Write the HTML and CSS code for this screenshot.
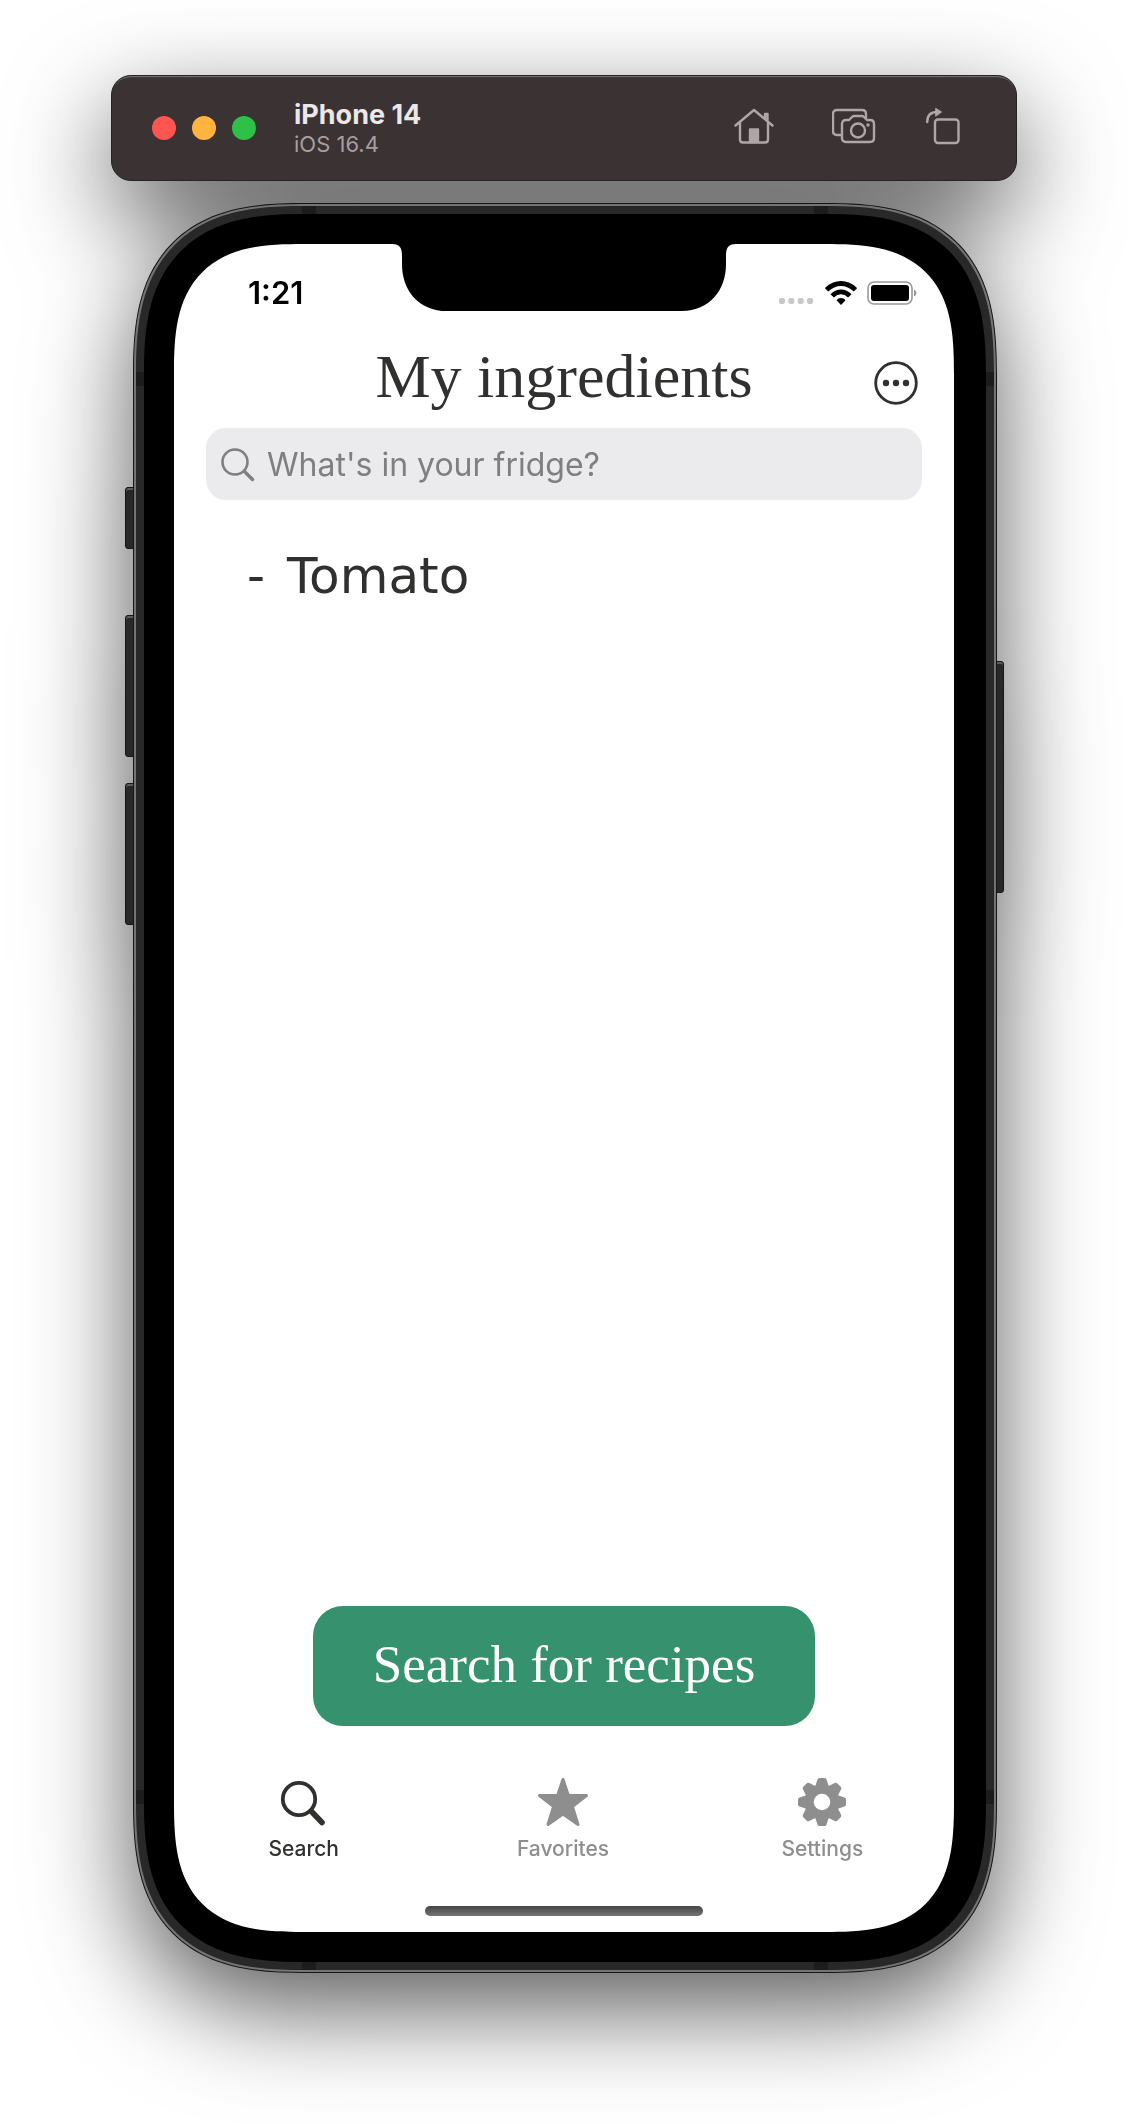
FILE: index.html
```html
<!DOCTYPE html>
<html lang="en">
<head>
<meta charset="utf-8">
<meta name="viewport" content="width=device-width, initial-scale=1">
<title>My ingredients</title>
<link rel="stylesheet" href="styles.css">
</head>
<body>
<div class="simulator">
  <header class="toolbar">
    <div class="lights">
      <button class="light light-close" aria-label="Close"></button>
      <button class="light light-minimize" aria-label="Minimize"></button>
      <button class="light light-zoom" aria-label="Zoom"></button>
    </div>
    <div class="device">
      <div class="device-name">iPhone 14</div>
      <div class="device-os">iOS 16.4</div>
    </div>
    <div class="tools">
      <button class="tool" aria-label="Home">
        <svg width="48" height="38" viewBox="0 0 48 38" fill="none" stroke="currentColor" stroke-width="2.400" stroke-linecap="round" stroke-linejoin="round"><path d="M1.500 18.500 20 3 38.500 18.500M6 15v17.500q0 3 3 3h22q3 0 3-3V15M31 11V7h2.500v6"/><path d="M16 35V22.500h8V35z" fill="currentColor"/></svg>
      </button>
      <button class="tool" aria-label="Screenshot">
        <svg width="44" height="38" viewBox="0 0 44 38" fill="none" stroke="currentColor" stroke-width="2.400" stroke-linejoin="round" stroke-linecap="round"><path d="M9 28H5q-4 0-4-4V7q0-4 4-4h25q4 0 4 4v3.500"/><path d="M10 31V17q0-4 4-4h3l3-3q1-1 2.500-1h7q1.500 0 2.500 1l3 3h3q4 0 4 4v14q0 4-4 4H14q-4 0-4-4z"/><circle cx="26" cy="23.500" r="7"/><circle cx="36" cy="18" r="1.700" fill="currentColor" stroke="none"/></svg>
      </button>
      <button class="tool" aria-label="Rotate">
        <svg width="34" height="38" viewBox="0 0 34 38" fill="none" stroke="currentColor" stroke-width="2.400" stroke-linejoin="round" stroke-linecap="round"><rect x="9" y="12.500" width="23.500" height="23.500" rx="3"/><path d="M1.200 15q0-10 10-10"/><path d="M10 1.500 15.500 5 10 9z" fill="currentColor" stroke-width="1"/></svg>
      </button>
    </div>
  </header>

  <div class="phone">
    <span class="key key-mute"></span>
    <span class="key key-up"></span>
    <span class="key key-down"></span>
    <span class="key key-power"></span>
    <div class="rim">
      <div class="band">
        <span class="seam seam-across seam-left seam-top-edge"></span>
        <span class="seam seam-across seam-right seam-top-edge"></span>
        <span class="seam seam-across seam-left seam-bottom-edge"></span>
        <span class="seam seam-across seam-right seam-bottom-edge"></span>
        <span class="seam seam-down seam-top seam-left-edge"></span>
        <span class="seam seam-down seam-top seam-right-edge"></span>
        <span class="seam seam-down seam-bottom seam-left-edge"></span>
        <span class="seam seam-down seam-bottom seam-right-edge"></span>
        <div class="bezel">
          <main class="screen">
            <svg class="notch" width="344" height="68" viewBox="0 0 344 68"><path d="M0 0H344C336 0 334 4 334 12V20C334 47 317 67 289 67H55C27 67 10 47 10 20V12C10 4 8 0 0 0z"/></svg>
            <div class="status">
              <time class="clock">1:21</time>
              <div class="indicators">
                <svg width="36" height="26" viewBox="0 0 36 26" fill="#c8c8c8"><rect x="0" y="18" width="6" height="6" rx="2"/><rect x="9.300" y="18" width="6" height="6" rx="2"/><rect x="18.700" y="18" width="6" height="6" rx="2"/><rect x="28" y="18" width="6" height="6" rx="2"/></svg>
                <svg width="32" height="26" viewBox="0 0 32 26" fill="none" stroke="#000" stroke-width="4.800"><path d="M1.500 9.800Q8 3.500 16 3.500t14.500 6.300"/><path d="M7.200 15.800Q11 11.800 16 11.800t8.800 4"/><path d="M16 25 11.500 20.300q1.600-2.200 4.500-2.200t4.500 2.200z" fill="#000" stroke="none"/></svg>
                <svg width="50" height="26" viewBox="0 0 50 26"><rect x="1" y="2" width="44" height="22" rx="6" fill="none" stroke="#999" stroke-width="1.600"/><rect x="4" y="5" width="38" height="16" rx="3"/><path d="M47 9.500q2.500 1 2.500 3.500T47 16.500z" fill="#999"/></svg>
              </div>
            </div>
            <div class="heading">
              <h1 class="title">My ingredients</h1>
              <button class="more" aria-label="More options">
                <svg width="44" height="44" viewBox="0 0 44 44" fill="#30302e"><circle cx="22" cy="22" r="20.300" fill="none" stroke="#30302e" stroke-width="2.800"/><circle cx="12" cy="22" r="3.200"/><circle cx="22" cy="22" r="3.200"/><circle cx="32" cy="22" r="3.200"/></svg>
              </button>
            </div>
            <label class="field">
              <svg width="34" height="34" viewBox="0 0 34 34" fill="none" stroke="currentColor" stroke-linecap="round"><circle cx="14" cy="14" r="12.500" stroke-width="2.600"/><path d="m23.500 23.500 8 8" stroke-width="3.400"/></svg>
              <input class="field-input" type="text" placeholder="What's in your fridge?" aria-label="What's in your fridge?">
            </label>
            <ul class="ingredients">
              <li class="ingredient"><span>-</span><span>Tomato</span></li>
            </ul>
            <button class="submit">Search for recipes</button>
            <nav class="tabs">
              <a class="tab tab-active" href="#search">
                <svg width="48" height="50" viewBox="0 0 48 50" fill="none" stroke="currentColor" stroke-linecap="round"><circle cx="19" cy="22" r="16.200" stroke-width="3.800"/><path d="M32 35 42 45.500" stroke-width="5.600"/></svg>
                Search
              </a>
              <a class="tab" href="#favorites">
                <svg width="52" height="50" viewBox="0 0 52 50" fill="currentColor" stroke="currentColor" stroke-width="3" stroke-linejoin="round"><path d="M26 2.500 31.400 18.500H49.500L35.400 29.500 41 47.500 26 37 11 47.500 16.600 29.500 2.500 18.500H20.600z"/></svg>
                Favorites
              </a>
              <a class="tab" href="#settings">
                <svg width="50" height="50" viewBox="-25 -25 50 50" fill="currentColor"><defs><path id="tooth" d="M-7-15-4.500-22.500Q-4-24-2.500-24h5Q4-24 4.500-22.500L7-15z"/></defs><path fill-rule="evenodd" d="M0-17.500a17.500 17.500 0 1 0 0 35a17.500 17.500 0 1 0 0-35zM0-8.300a8.300 8.300 0 1 1 0 16.600a8.300 8.300 0 1 1 0-16.600z"/><use href="#tooth"/><use href="#tooth" transform="rotate(45)"/><use href="#tooth" transform="rotate(90)"/><use href="#tooth" transform="rotate(135)"/><use href="#tooth" transform="rotate(180)"/><use href="#tooth" transform="rotate(225)"/><use href="#tooth" transform="rotate(270)"/><use href="#tooth" transform="rotate(315)"/></svg>
                Settings
              </a>
            </nav>
            <div class="home-bar"></div>
          </main>
        </div>
      </div>
    </div>
  </div>
</div>
</body>
</html>
```
FILE: styles.css
```css
* {
  box-sizing: border-box;
}

body {
  margin: 0;
  background: #fff;
  color: #30302e;
  font-family: Inter, "Liberation Sans", sans-serif;
}

button {
  border: 0;
  padding: 0;
  background: none;
  color: inherit;
  font: inherit;
}

svg {
  display: block;
  flex: none;
}

.simulator {
  display: flex;
  flex-direction: column;
  gap: 22px;
  min-height: 100vh;
  padding: 75px 111px 151px;
  overflow: hidden;
  filter: drop-shadow(0 36px 50px rgba(0, 0, 0, 0.64));
}

/* Simulator window bar */
.toolbar {
  display: flex;
  align-items: center;
  height: 106px;
  padding: 0 56px 0 40px;
  border: 1px solid #242223;
  border-radius: 20px;
  background: #3a3233;
  box-shadow: inset 0 2px 1px -1px #777;
}

.lights {
  display: flex;
  gap: 16px;
}

.light {
  width: 24px;
  height: 24px;
  border-radius: 50%;
}

.light-close { background: #ff5551; }
.light-minimize { background: #ffb43f; }
.light-zoom { background: #2dc147; }

.device {
  flex: 1;
  margin-left: 38px;
  padding-top: 2px;
}

.device-name {
  color: #eae8e8;
  font-size: 27px;
  font-weight: 700;
  line-height: 30px;
}

.device-os {
  color: #a69fa0;
  font-size: 22px;
  line-height: 28px;
}

.tools {
  display: flex;
  gap: 50px;
  padding-bottom: 4px;
  color: #aea6a7;
}

/* Phone body, from the outside in */
.phone {
  position: relative;
  display: flex;
  flex: 1;
  margin: 0 20px 0 22px;
}

.rim,
.band,
.bezel,
.screen {
  display: flex;
  flex: 1;
  flex-direction: column;
}

.rim {
  position: relative;
  border: 1px solid #161616;
  border-radius: 136px;
  background: #747474;
  padding: 2px;
}

.band {
  position: relative;
  border-radius: 133px;
  background: #282828;
  padding: 8px;
}

.bezel {
  border-radius: 125px;
  background: #000;
  padding: 30px 32px 30px 30px;
}

.screen {
  position: relative;
  border-radius: 96px;
  background: #fff;
}

@supports (corner-shape: superellipse(1.5)) {
  .rim {
    border-radius: 171px;
    corner-shape: superellipse(1.4);
  }

  .band {
    border-radius: 168px;
    corner-shape: superellipse(1.4);
  }

  .bezel {
    border-radius: 160px;
    corner-shape: superellipse(1.4);
  }

  .screen {
    border-radius: 130px;
    corner-shape: superellipse(1.5);
  }
}

.seam {
  position: absolute;
  background: #1c1c1c;
}

.seam-across { width: 14px; height: 8px; }
.seam-down { width: 8px; height: 14px; }
.seam-left { left: 166px; }
.seam-right { right: 166px; }
.seam-top { top: 166px; }
.seam-bottom { bottom: 166px; }
.seam-top-edge { top: 0; }
.seam-bottom-edge { bottom: 0; }
.seam-left-edge { left: 0; }
.seam-right-edge { right: 0; }

.key {
  position: absolute;
  left: -8px;
  width: 10px;
  border: 1px solid #161616;
  border-radius: 3px 0 0 3px;
  background: #282828;
  box-shadow: inset 0 2px #5c5c5c;
}

.key-mute { top: 284px; height: 62px; }
.key-up { top: 412px; height: 142px; }
.key-down { top: 580px; height: 142px; }

.key-power {
  top: 458px;
  right: -7px;
  left: auto;
  height: 232px;
  border-radius: 0 3px 3px 0;
}

/* App */
.notch {
  position: absolute;
  top: 0;
  left: 50%;
  transform: translateX(-50%);
}

.status {
  display: flex;
  align-items: center;
  justify-content: space-between;
  height: 94px;
  padding: 4px 37px 0 74px;
  color: #000;
}

.clock {
  font-size: 31px;
  font-weight: 600;
  line-height: 36px;
}

.indicators {
  display: flex;
  align-items: center;
  gap: 10px;
}

.heading {
  display: grid;
  grid-template-columns: 1fr auto 1fr;
  align-items: center;
  height: 90px;
  padding: 0 36px;
}

.title {
  grid-column: 2;
  align-self: start;
  margin: 8px 0 0;
  font: 400 62px/60px "Liberation Serif", serif;
}

.more {
  justify-self: end;
}

.field {
  display: flex;
  align-items: center;
  gap: 12px;
  height: 72px;
  margin: 0 32px;
  padding: 2px 16px 0 15px;
  border-radius: 20px;
  background: #ebebed;
  color: #7f7f82;
}

.field-input {
  flex: 1;
  min-width: 0;
  border: 0;
  outline: 0;
  padding: 0;
  background: none;
  color: #30302e;
  font: 400 32px/40px Inter, "Liberation Sans", sans-serif;
}

.field-input::placeholder {
  color: #7f7f82;
  opacity: 1;
}

.ingredients {
  flex: 1;
  margin: 0;
  padding: 46px 73px;
  list-style: none;
}

.ingredient {
  display: flex;
  gap: 22px;
  font: 400 50px/60px "DejaVu Sans", sans-serif;
}

.submit {
  align-self: center;
  padding: 28px 60px 32px;
  border-radius: 30px;
  background: #35916e;
  color: #fff;
  font: 400 53px/60px "Liberation Serif", serif;
}

.tabs {
  display: grid;
  grid-template-columns: repeat(3, 1fr);
  margin: 51px 2px 0 0;
}

.tab {
  display: flex;
  flex-direction: column;
  align-items: center;
  gap: 10px;
  color: #8e8e8e;
  font-size: 21px;
  font-weight: 500;
  line-height: 24px;
  text-decoration: none;
}

.tab-active {
  color: #30302e;
}

.home-bar {
  align-self: center;
  width: 278px;
  height: 10px;
  margin: 45px 0 16px;
  border-radius: 5px;
  background: linear-gradient(#454545, #757575);
}
```
